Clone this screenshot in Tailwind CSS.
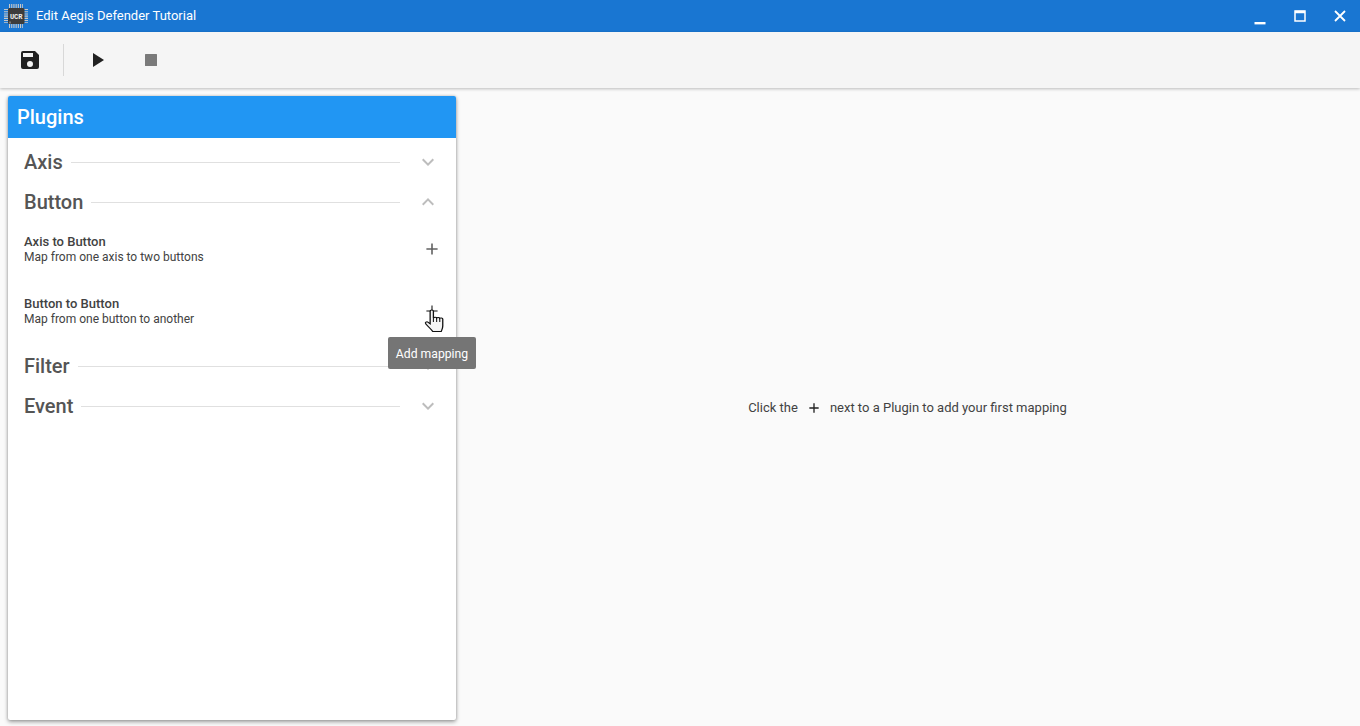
<!DOCTYPE html>
<html lang="en">
<head>
  <meta charset="UTF-8" />
  <title>Edit Aegis Defender Tutorial</title>
  <script src="https://cdn.jsdelivr.net/npm/@tailwindcss/browser@4"></script>
</head>
<body class="h-[726px] w-[1360px] overflow-hidden bg-[#fafafa] flex flex-col font-['Roboto',sans-serif] text-[#424242]">
  <!-- Title bar -->
  <header class="h-8 shrink-0 bg-[#1976d2] flex items-center text-white">
    <svg class="w-6 h-6 ml-1 shrink-0" viewBox="0 0 24 24">
      <g stroke="#c8c8c8" stroke-width="4" stroke-dasharray="1.100 1.100" fill="none">
        <path d="M5 2H19M5 22H19M2 5V19M22 5V19"/>
      </g>
      <rect x="4" y="4" width="16.500" height="16" rx="1.500" fill="#3c3c3c"/>
      <text x="12.200" y="14.500" text-anchor="middle" font-size="7" font-weight="700" fill="#f0f0f0" font-family="Liberation Mono">UCR</text>
      <rect x="5" y="17.500" width="2" height="2" fill="#777"/>
    </svg>
    <span class="ml-2 text-[13px]">Edit Aegis Defender Tutorial</span>
    <div class="ml-auto flex items-center">
      <button class="w-10 h-8 flex items-center justify-center">
        <svg class="w-6 h-6" viewBox="0 0 24 24" fill="white"><rect x="6.500" y="18" width="11" height="2.400"/></svg>
      </button>
      <button class="w-10 h-8 flex items-center justify-center">
        <svg class="w-6 h-6" viewBox="0 0 24 24" fill="none" stroke="white"><rect x="7" y="7" width="10" height="10" stroke-width="1.500"/><path d="M7 8H17" stroke-width="2.500"/></svg>
      </button>
      <button class="w-10 h-8 flex items-center justify-center">
        <svg class="w-6 h-6" viewBox="0 0 24 24" fill="none" stroke="white" stroke-width="1.800"><path d="M7 7L17 17M17 7L7 17"/></svg>
      </button>
    </div>
  </header>

  <!-- Toolbar -->
  <div class="h-14 shrink-0 bg-[#f5f5f5] shadow-[0_1px_3px_rgba(0,0,0,0.25)] flex items-center z-10">
    <button class="w-6 h-6 ml-[18px]">
      <svg viewBox="0 0 24 24" fill="#212121"><path d="M17 3H5a2 2 0 0 0-2 2v14a2 2 0 0 0 2 2h14a2 2 0 0 0 2-2V7l-4-4zm-5 16a3 3 0 1 1 0-6 3 3 0 0 1 0 6zm3-10H5V5h10v4z"/></svg>
    </button>
    <div class="w-px h-8 bg-[#d8d8d8] ml-[21px]"></div>
    <button class="w-6 h-6 ml-[21px]">
      <svg viewBox="0 0 24 24" fill="#212121"><path d="M8 5v14l11-7z"/></svg>
    </button>
    <button class="w-6 h-6 ml-[30px]">
      <svg viewBox="0 0 24 24" fill="#7a7a7a"><rect x="6" y="6" width="12" height="12" rx="0.500"/></svg>
    </button>
  </div>

  <main class="flex-1 flex min-h-0 pt-2 pb-1.5 pl-2">
    <!-- Plugin list -->
    <section class="relative w-[448px] shrink-0 bg-white rounded-[2px] shadow-[0_2px_4px_rgba(0,0,0,0.35),0_0_3px_rgba(0,0,0,0.2)]">
      <h2 class="h-[42px] bg-[#2196f3] rounded-t-[2px] text-white text-[20px] font-medium flex items-center pl-[9px]">Plugins</h2>
      <div class="pt-1">
        <div class="h-10 flex items-center pl-4 pr-4">
          <h3 class="text-[20px] font-medium text-[#555]">Axis</h3>
          <div class="flex-1 h-px bg-[#e0e0e0] ml-2"></div>
          <svg class="w-6 h-6 ml-4" viewBox="0 0 24 24" fill="#bdbdbd"><path d="M7.410 8.590 12 13.170l4.590-4.580L18 10l-6 6-6-6z"/></svg>
        </div>
        <div class="h-10 flex items-center pl-4 pr-4">
          <h3 class="text-[20px] font-medium text-[#555]">Button</h3>
          <div class="flex-1 h-px bg-[#e0e0e0] ml-2"></div>
          <svg class="w-6 h-6 ml-4" viewBox="0 0 24 24" fill="#bdbdbd"><path d="M7.410 15.410 12 10.830l4.590 4.580L18 14l-6-6-6 6z"/></svg>
        </div>
        <div class="h-[62px] flex items-start pl-4 pr-[12px] pt-[12px]">
          <div class="flex-1 leading-[16px]">
            <div class="text-[13px] font-medium">Axis to Button</div>
            <div class="text-[12px] -mt-px">Map from one axis to two buttons</div>
          </div>
          <svg class="w-6 h-6 mt-[3px]" viewBox="0 0 24 24" fill="#616161"><path d="M19 13h-6v6h-2v-6H5v-2h6V5h2v6h6v2z" transform="translate(2.400 2.400) scale(0.8)"/></svg>
        </div>
        <div class="h-[62px] flex items-start pl-4 pr-[12px] pt-[12px]">
          <div class="flex-1 leading-[16px]">
            <div class="text-[13px] font-medium">Button to Button</div>
            <div class="text-[12px] -mt-px">Map from one button to another</div>
          </div>
          <svg class="w-6 h-6 mt-[3px]" viewBox="0 0 24 24" fill="#616161"><path d="M19 13h-6v6h-2v-6H5v-2h6V5h2v6h6v2z" transform="translate(2.400 2.400) scale(0.8)"/></svg>
        </div>
        <div class="h-10 flex items-center pl-4 pr-4">
          <h3 class="text-[20px] font-medium text-[#555]">Filter</h3>
          <div class="flex-1 h-px bg-[#e0e0e0] ml-2"></div>
          <svg class="w-6 h-6 ml-4" viewBox="0 0 24 24" fill="#bdbdbd"><path d="M7.410 8.590 12 13.170l4.590-4.580L18 10l-6 6-6-6z"/></svg>
        </div>
        <div class="h-10 flex items-center pl-4 pr-4">
          <h3 class="text-[20px] font-medium text-[#555]">Event</h3>
          <div class="flex-1 h-px bg-[#e0e0e0] ml-2"></div>
          <svg class="w-6 h-6 ml-4" viewBox="0 0 24 24" fill="#bdbdbd"><path d="M7.410 8.590 12 13.170l4.590-4.580L18 10l-6 6-6-6z"/></svg>
        </div>
      </div>

      <!-- Tooltip and mouse pointer -->
      <div class="absolute left-[380px] top-[241px] w-[88px] h-8 pt-[2px] rounded-[2px] bg-[#757575] text-white text-[12.200px] flex items-center justify-center">Add mapping</div>
      <svg class="absolute left-[415px] top-[213px] w-[26px] h-[26px]" viewBox="0 0 20 26" preserveAspectRatio="none">
        <path d="M5.500 2.200c0-1.600 2.500-1.600 2.500 0V9c.3-1 2.300-1 2.500 0 .3-.8 2.200-.8 2.400.3.400-.7 2.200-.5 2.300.7v7c0 2.500-.6 3.800-1.200 5.500H7.500C6.500 20.500 4.500 18.500 2.200 15c-1-1.500.6-2.800 1.800-1.700l1.500 1.500z" fill="#f4f4f4" stroke="#111" stroke-width="1"/>
        <path d="M8 9v4M10.500 9v4M12.900 9.300V13" stroke="#111" stroke-width="0.800" fill="none"/>
      </svg>
    </section>

    <!-- Empty state -->
    <div class="flex-1 flex items-center justify-center text-[13px] pr-px">
      <span>Click the</span>
      <svg class="w-4 h-4 mx-2" viewBox="0 0 24 24" fill="#212121"><path d="M19 13h-6v6h-2v-6H5v-2h6V5h2v6h6v2z"/></svg>
      <span>next to a Plugin to add your first mapping</span>
    </div>
  </main>
</body>
</html>
